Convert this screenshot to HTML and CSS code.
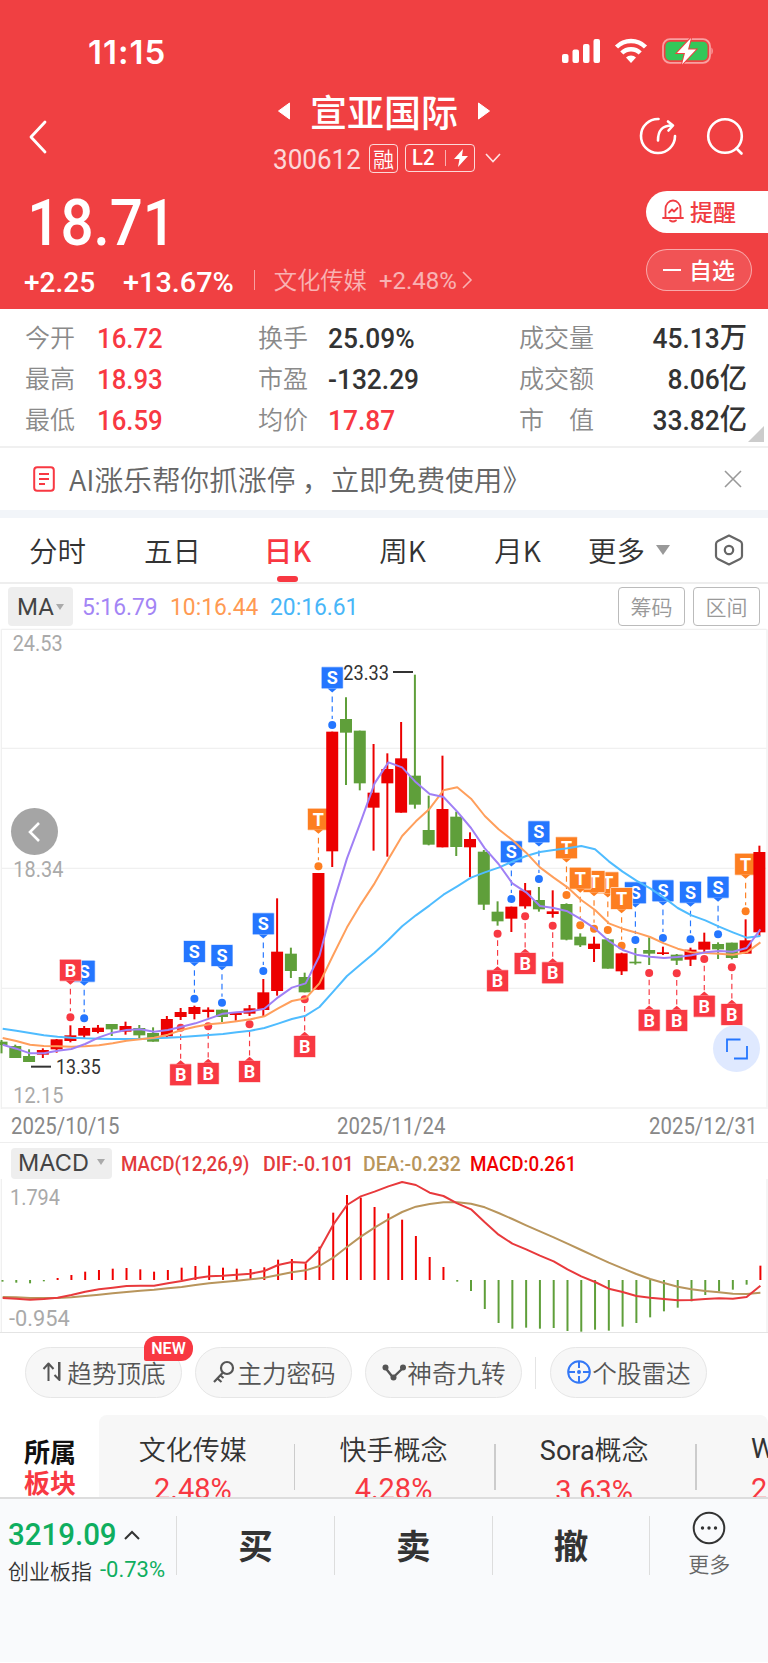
FILE: index.html
```html
<!DOCTYPE html>
<html lang="zh-CN">
<head>
    <meta charset="UTF-8">
    <meta name="viewport" content="width=device-width, initial-scale=1.0">
    <title>宣亚国际 300612</title>
    <link rel="stylesheet" href="styles.css">
</head>
<body>
    <header class="header">
        <div class="status-bar">
            <span class="clock">11:15</span>
            <svg class="status-icons" width="152" height="28" viewBox="0 0 152 28">
                <g fill="#fff">
                    <rect x="1" y="17" width="6.5" height="9" rx="2"/>
                    <rect x="11.5" y="12.5" width="6.5" height="13.5" rx="2"/>
                    <rect x="22" y="7" width="6.5" height="19" rx="2"/>
                    <rect x="32.5" y="2" width="6.5" height="24" rx="2"/>
                    <path d="M70 26l-5-5.500a7 7 0 0 1 10 0z"/>
                </g>
                <g fill="none" stroke="#fff" stroke-width="4.4">
                    <path d="M55.500 10a20.500 20.500 0 0 1 29 0"/>
                    <path d="M60.800 16a13 13 0 0 1 18.400 0"/>
                </g>
                <rect x="102" y="2.2" width="47" height="23.6" rx="7" fill="none" stroke="#fff" stroke-opacity=".5" stroke-width="1.8"/>
                <rect x="104.5" y="4.8" width="42" height="18.4" rx="4.5" fill="#34c759"/>
                <path d="M150.500 10.500c1.600 1 1.600 6 0 7z" fill="#fff" opacity=".6"/>
                <path d="M130 1l-14 15h8l-3 11.500 14-15h-8z" fill="#fff" stroke="#f04042" stroke-width="2" paint-order="stroke"/>
            </svg>
        </div>

        <div class="nav">
            <svg class="back" width="24" height="36" viewBox="0 0 24 36"><path d="M19 3L5 18l14 15" fill="none" stroke="#fff" stroke-width="2.8" stroke-linecap="round" stroke-linejoin="round"/></svg>
            <div class="title-box">
                <div class="title">
                    <svg width="12" height="18" viewBox="0 0 12 18"><path d="M11.500 1v16L.5 9z" fill="#fff" stroke="#fff" stroke-linejoin="round"/></svg>
                    <h1>宣亚国际</h1>
                    <svg width="12" height="18" viewBox="0 0 12 18"><path d="M.5 1v16l11-8z" fill="#fff" stroke="#fff" stroke-linejoin="round"/></svg>
                </div>
                <div class="code-row">
                    <span class="num code">300612</span>
                    <span class="tag">融</span>
                    <span class="tag tag-l2"><span class="num">L2</span><i></i><svg width="14" height="18" viewBox="0 0 14 18"><path d="M9 0L0 10h5.500L4 18l10-11H8z" fill="#fff"/></svg></span>
                    <svg class="down" width="16" height="12" viewBox="0 0 16 12"><path d="M1 2l7 7.500L15 2" fill="none" stroke="#fff" stroke-opacity=".85" stroke-width="1.6"/></svg>
                </div>
            </div>
            <div class="nav-icons">
                <svg width="40" height="40" viewBox="0 0 40 40" fill="none" stroke="#fff" stroke-width="2.6" stroke-linecap="round" stroke-linejoin="round">
                    <path d="M20.500 3A17 17 0 1 0 37 20"/>
                    <path d="M20 24.500c0-9 3-15 14-15M30 5.500l5 4-4.500 5"/>
                </svg>
                <svg width="40" height="40" viewBox="0 0 40 40" fill="none" stroke="#fff" stroke-width="2.6" stroke-linecap="round">
                    <circle cx="20" cy="20" r="16.8"/>
                    <path d="M31.500 32.500l5 5"/>
                </svg>
            </div>
        </div>

        <div class="quote">
            <div>
                <div class="num price">18.71</div>
                <div class="change">
                    <span class="num">+2.25</span>
                    <span class="num pct">+13.67%</span>
                    <i></i>
                    <span class="sector">文化传媒</span>
                    <span class="num sector-pct">+2.48%</span>
                    <svg width="12" height="20" viewBox="0 0 12 20"><path d="M2 2l8 8-8 8" fill="none" stroke="#fff" stroke-opacity=".6" stroke-width="1.6"/></svg>
                </div>
            </div>
            <div class="actions">
                <button class="remind">
                    <svg width="22" height="24" viewBox="0 0 22 24" fill="none" stroke="#f03c42" stroke-width="1.8" stroke-linecap="round" stroke-linejoin="round">
                        <path d="M1 19h20M3.500 19v-9a7.500 8.500 0 0 1 15 0v9M8 21.500q3 2 6 0"/>
                        <path d="M7 13.500l3-3 2 2 3.500-3.500"/>
                    </svg>
                    提醒
                </button>
                <button class="favor"><i></i>自选</button>
            </div>
        </div>
    </header>

    <section class="stats">
        <span class="label">今开</span><b class="num red">16.72</b>
        <span class="label">换手</span><b class="num">25.09%</b>
        <span class="label">成交量</span><b class="num right">45.13<em>万</em></b>
        <span class="label">最高</span><b class="num red">18.93</b>
        <span class="label">市盈</span><b class="num">-132.29</b>
        <span class="label">成交额</span><b class="num right">8.06<em>亿</em></b>
        <span class="label">最低</span><b class="num red">16.59</b>
        <span class="label">均价</span><b class="num red">17.87</b>
        <span class="label">市　值</span><b class="num right">33.82<em>亿</em></b>
        <span class="corner"></span>
    </section>

    <section class="notice">
        <svg width="22" height="26" viewBox="0 0 22 26" fill="none" stroke="#f83842" stroke-width="2">
            <rect x="1.2" y="1.2" width="19.6" height="23.6" rx="3"/>
            <path d="M6 8h10M6 13h10M6 18h6"/>
        </svg>
        <span>AI涨乐帮你抓涨停 ，立即免费使用》</span>
        <svg class="close" width="18" height="20" viewBox="0 0 18 20"><path d="M1 2l16 16M17 2L1 18" stroke="#999" stroke-width="1.6"/></svg>
    </section>

    <nav class="tabs">
        <a>分时</a>
        <a>五日</a>
        <a class="active">日K</a>
        <a>周K</a>
        <a>月K</a>
        <a class="more">更多<i></i></a>
        <svg width="30" height="32" viewBox="0 0 30 32" fill="none" stroke="#666" stroke-width="2.2" stroke-linejoin="round">
            <path d="M15 1.500L26 7q2 1 2 3v12q0 2-2 3l-11 5.500L4 25q-2-1-2-3V10q0-2 2-3z"/>
            <circle cx="15" cy="16" r="4.2"/>
        </svg>
    </nav>

    <div class="ma-row">
        <span class="select num">MA<i></i></span>
        <span class="num ma5">5:16.79</span>
        <span class="num ma10">10:16.44</span>
        <span class="num ma20">20:16.61</span>
        <div class="ma-buttons"><button>筹码</button><button>区间</button></div>
    </div>

    <div class="k-box">
        <svg id="kline" width="768" height="481" viewBox="0 -36 2304 1443"></svg>
        <button class="prev"><svg width="16" height="22" viewBox="0 0 16 22"><path d="M12 2L3 11l9 9" fill="none" stroke="#fff" stroke-width="2.6"/></svg></button>
        <button class="expand"><svg width="22" height="22" viewBox="0 0 22 22"><path d="M1 14V1.500h13.500M8 20.500h13V8" fill="none" stroke="#2476ff" stroke-width="1.8"/></svg></button>
    </div>

    <div class="dates num"><span>2025/10/15</span><span>2025/11/24</span><span>2025/12/31</span></div>

    <div class="macd">
        <div class="macd-row">
            <span class="select">MACD<i></i></span>
            <span class="num dif">MACD(12,26,9)</span>
            <span class="num dif">DIF:-0.101</span>
            <span class="num dea">DEA:-0.232</span>
            <span class="num bar">MACD:0.261</span>
        </div>
        <svg id="macd" width="768" height="153" viewBox="0 240 2304 459"></svg>
    </div>

    <section class="tools">
        <button>
            <svg width="24" height="24" viewBox="0 0 24 24" fill="none" stroke="#555" stroke-width="2"><path d="M6.500 21V4M1.500 9l5-5.500L11.500 9M17 2v18M12.500 15l5 5V2" stroke-linejoin="round"/></svg>趋势顶底
            <span class="new">NEW</span>
        </button>
        <button>
            <svg width="24" height="24" viewBox="0 0 24 24" fill="none" stroke="#555" stroke-width="2.2"><circle cx="15" cy="8" r="6"/><path d="M11 12.500L2 22M5.500 18.500l4 3.500M8.500 15.500l3 2.500"/></svg>主力密码
        </button>
        <button>
            <svg width="24" height="24" viewBox="0 0 24 24" fill="none" stroke="#555" stroke-width="2.4"><path d="M3.500 8l7.500 9.500L21 8"/><g fill="#555" stroke="none"><circle cx="3.5" cy="7.5" r="3"/><circle cx="11.5" cy="17.5" r="3"/><circle cx="21" cy="7.5" r="3"/></g></svg>神奇九转
        </button>
        <i></i>
        <button>
            <svg width="24" height="24" viewBox="0 0 24 24" fill="none" stroke="#3478f6" stroke-width="2"><circle cx="12" cy="12" r="10.8"/><path d="M12 1v7M12 16v7M1 12h7M16 12h7"/><circle cx="12" cy="12" r="2" fill="#3478f6" stroke="none"/></svg>个股雷达
        </button>
    </section>

    <section class="blocks">
        <div class="blocks-title"><span>所属</span><span class="red">板块</span></div>
        <div class="blocks-list">
            <div><span>文化传媒</span><b class="num">2.48%</b></div>
            <div><span>快手概念</span><b class="num">4.28%</b></div>
            <div><span><span class="num">Sora</span>概念</span><b class="num">3.63%</b></div>
            <div class="cut"><span class="num">W</span><b class="num">2</b></div>
        </div>
    </section>

    <footer class="footer">
        <div class="index">
            <div class="index-value"><span class="num">3219.09</span><svg width="16" height="10" viewBox="0 0 16 10"><path d="M1 9l7-7 7 7" fill="none" stroke="#333" stroke-width="2"/></svg></div>
            <div class="index-name">创业板指<span class="num">-0.73%</span></div>
        </div>
        <a>买</a>
        <a>卖</a>
        <a>撤</a>
        <div class="footer-more">
            <svg width="34" height="34" viewBox="0 0 34 34"><circle cx="17" cy="17" r="15.3" fill="none" stroke="#333" stroke-width="2"/><g fill="#333"><circle cx="10.5" cy="17" r="1.7"/><circle cx="17" cy="17" r="1.7"/><circle cx="23.5" cy="17" r="1.7"/></g></svg>
            更多
        </div>
    </footer>

    <script src="chart.js"></script>
</body>
</html>
```
FILE: styles.css
```css
* {
    box-sizing: border-box;
}

body {
    margin: 0;
    width: 768px;
    height: 1663px;
    overflow: hidden;
    background: #fff;
    color: #333;
    font-family: "Noto Sans CJK SC", sans-serif;
    font-weight: 350;
}

h1, b, em, i {
    margin: 0;
    font-style: normal;
}

svg {
    display: block;
    flex: none;
}

span, a, b {
    white-space: nowrap;
}

button {
    padding: 0;
    border: none;
    font: inherit;
    color: inherit;
}

.num {
    font-family: Roboto, "Noto Sans CJK SC", sans-serif;
    font-weight: 400;
    transform-origin: left;
}

.red {
    color: #f83842;
}

/* header */
.header {
    height: 309px;
    background: #f04042;
    color: #fff;
}

.status-bar {
    display: flex;
    justify-content: space-between;
    align-items: center;
    height: 78px;
    padding: 26px 55px 0 88px;
}

.clock {
    font: 600 33px/38px Inter, sans-serif;
    letter-spacing: 1px;
}

.status-icons {
    margin-top: -3px;
}

.nav {
    display: flex;
    height: 102px;
}

.back {
    margin: 41px 0 0 26px;
}

.title-box {
    width: 260px;
    margin-left: 215px;
}

.title {
    display: flex;
    align-items: center;
    justify-content: center;
    height: 66px;
    gap: 20px;
    margin-left: -22px;
}

.title h1 {
    font-size: 37px;
    font-weight: 500;
    line-height: 66px;
}

.code-row {
    display: flex;
    align-items: center;
    height: 28px;
    padding-left: 8px;
}

.code {
    width: 96px;
    padding-top: 2px;
    font-size: 28px;
    opacity: .8;
    transform: scaleX(.93);
}

.tag {
    display: flex;
    align-items: center;
    justify-content: center;
    width: 29px;
    height: 29px;
    border: 1.5px solid rgba(255, 255, 255, .8);
    border-radius: 4px;
    font-size: 21px;
    line-height: 26px;
}

.tag-l2 {
    width: 70px;
    height: 28px;
    margin-left: 7px;
    gap: 8px;
    font-size: 22px;
}

.tag-l2 .num {
    font-weight: 500;
    transform: scaleX(.92);
}

.tag-l2 i {
    width: 1px;
    height: 16px;
    background: rgba(255, 255, 255, .6);
}

.down {
    margin-left: 10px;
}

.nav-icons {
    display: flex;
    gap: 27px;
    margin: 38px 0 0 113px;
}

.quote {
    display: flex;
    justify-content: space-between;
}

.price {
    height: 86px;
    padding: 2px 0 0 30px;
    font-size: 64px;
    font-weight: 500;
    line-height: 84px;
    transform: scaleX(.91);
}

.change {
    display: flex;
    align-items: center;
    height: 32px;
    padding-left: 24px;
    font-size: 28px;
}

.change .num {
    font-weight: 500;
}

.change .pct {
    margin-left: 28px;
    transform: scaleX(1.03);
}

.change i {
    width: 1px;
    height: 20px;
    margin: -4px 19px 0 23px;
    background: rgba(255, 255, 255, .5);
}

.change .sector {
    margin: -6px 12px 0 0;
    font-size: 23.300px;
    opacity: .6;
}

.change .sector-pct {
    margin: -2px 4px 0 0;
    font-size: 24px;
    font-weight: 400;
    opacity: .6;
}

.change svg {
    margin-top: -4px;
}

.actions {
    display: flex;
    flex-direction: column;
    align-items: flex-start;
    gap: 16px;
    width: 122px;
    padding-top: 11px;
}

.actions button {
    display: flex;
    align-items: center;
    gap: 6px;
    height: 42px;
    padding-bottom: 3px;
    font-size: 23px;
    font-weight: 500;
}

.remind {
    width: 122px;
    padding-left: 16px;
    border-radius: 21px 0 0 21px;
    background: #fff;
    color: #f03c42;
}

.actions .favor {
    width: 106px;
    gap: 8px;
    padding: 0 0 3px 16px;
    border: 1.5px solid rgba(255, 255, 255, .5);
    border-radius: 21px;
    background: rgba(255, 255, 255, .1);
    color: #fff;
}

.favor i {
    width: 18px;
    height: 2px;
    margin-top: 2px;
    background: #fff;
}

/* stats */
.stats {
    position: relative;
    display: grid;
    grid-template-columns: 73px 160px 71px 190px 110px 118px;
    grid-auto-rows: 41.400px;
    align-items: center;
    height: 139px;
    padding: 9px 0 0 25px;
    border-bottom: 2px solid #f0f0f0;
    font-size: 25px;
}

.stats .label {
    margin: -6px 0 0;
    color: #8a8a8a;
}

.stats b {
    margin-left: -1px;
    font-size: 28px;
    font-weight: 500;
    line-height: 34px;
    transform: scaleX(.92);
}

.stats b:nth-of-type(3n + 2) {
    transform: scaleX(.94);
}

.stats em {
    font-size: 29px;
    line-height: 1;
}

.stats .right {
    margin-right: 0;
    text-align: right;
    transform: scaleX(.94);
    transform-origin: right;
}

.corner {
    position: absolute;
    right: 4px;
    bottom: 4px;
    border-left: 16px solid transparent;
    border-bottom: 16px solid #ccc;
}

.notice {
    display: flex;
    align-items: center;
    height: 70px;
    padding: 0 26px 0 33px;
    border-bottom: 8px solid #f2f5f9;
    color: #666;
    font-size: 28.700px;
}

.notice span {
    margin: -2px auto 0 14px;
}

/* period tabs */
.tabs {
    display: flex;
    align-items: center;
    height: 66px;
    padding-right: 24px;
    border-bottom: 2px solid #eee;
    font-size: 28.500px;
    color: #333;
}

.tabs a {
    position: relative;
    width: 115px;
    line-height: 64px;
    text-align: center;
}

.tabs .active {
    color: #f83842;
    font-weight: 500;
}

.tabs .active::after {
    content: "";
    position: absolute;
    left: 47px;
    bottom: 0;
    width: 21px;
    height: 6px;
    border-radius: 3px;
    background: #f83842;
}

.tabs .more {
    display: flex;
    align-items: center;
    gap: 11px;
    width: auto;
    margin: 0 auto 0 13px;
}

.tabs .more i {
    border: 7px solid transparent;
    border-top: 10px solid #999;
    border-bottom: 0;
}

.ma-row {
    display: flex;
    align-items: center;
    height: 45px;
    padding: 0 8px;
    font-size: 24px;
}

.ma-row > .num:not(.select) {
    transform: scaleX(.95);
}

.select {
    display: flex;
    align-items: center;
    justify-content: center;
    gap: 2px;
    width: 65px;
    height: 39px;
    margin-right: 9px;
    border-radius: 4px;
    background: #eee;
    color: #444;
}

.select i {
    border: 4.500px solid transparent;
    border-top: 6px solid #aaa;
    border-bottom: 0;
}

.ma5 {
    width: 88px;
    color: #a385f5;
}

.ma10 {
    width: 100px;
    color: #ff9a52;
}

.ma20 {
    color: #48b6f8;
}

.ma-buttons {
    display: flex;
    gap: 8px;
    margin-left: auto;
}

.ma-buttons button {
    width: 67px;
    height: 39px;
    border: 1.500px solid #bbb;
    border-radius: 4px;
    background: #fff;
    color: #999;
    font-size: 21px;
    line-height: 33px;
}

/* charts */
.k-box {
    position: relative;
    height: 480px;
}

.k-box > svg {
    margin-top: -1px;
}

.k-box text,
.macd text {
    font-family: Roboto, sans-serif;
    font-weight: 400;
}

.k-box .flag {
    font-weight: 700;
}

.prev,
.expand {
    position: absolute;
    display: flex;
    align-items: center;
    justify-content: center;
    width: 47px;
    height: 47px;
    border-radius: 50%;
}

.prev {
    left: 11px;
    top: 180px;
    background: #a5a5a5;
}

.expand {
    left: 713px;
    top: 397px;
    background: #dfe9ff;
}

.dates {
    display: flex;
    justify-content: space-between;
    height: 35px;
    padding: 0 11px;
    border-bottom: 1.500px solid #eee;
    color: #888;
    font-size: 23px;
    line-height: 38px;
}

.dates span {
    transform: scaleX(.885);
    transform-origin: left;
}

.dates span:nth-child(2) {
    margin-left: 14px;
    transform-origin: center;
}

.dates span:last-child {
    transform-origin: right;
}

.macd {
    height: 190px;
    border-bottom: 1.500px solid #e4e4e4;
}

.macd-row {
    display: flex;
    align-items: center;
    height: 36px;
    padding: 4px 0 0 11px;
    font-size: 20px;
}

.macd-row .num {
    margin-top: 2px;
    font-weight: 500;
    transform: scaleX(.94);
}

.macd-row .select {
    gap: 8px;
    width: 101px;
    height: 31px;
    padding-bottom: 2px;
    font-family: Inter, sans-serif;
    font-size: 23.500px;
    font-weight: 400;
}

.dif {
    width: 142px;
    color: #e23a3c;
}

.macd-row .dif + .dif {
    width: 100px;
    transform: scaleX(.98);
}

.macd-row .dea {
    width: 107px;
    color: #b8955c;
    transform: scaleX(.97);
}

.bar {
    color: #f00000;
}

/* tools */
.tools {
    display: flex;
    align-items: center;
    height: 82px;
    padding: 0 0 3px 25px;
    gap: 13px;
}

.tools button {
    position: relative;
    display: flex;
    align-items: center;
    justify-content: center;
    gap: 1px;
    width: 157px;
    height: 51px;
    padding: 0 0 2px 1px;
    border: 1.500px solid #e6e6e6;
    border-radius: 26px;
    background: #f7f7f7;
    color: #555;
    font-size: 24.600px;
}

.tools > i {
    width: 2px;
    height: 32px;
    border-left: 1px solid #e4e4e4;
}

.new {
    position: absolute;
    left: 118px;
    top: -12px;
    width: 49px;
    height: 25px;
    border-radius: 12px 12px 12px 2px;
    background: #f83842;
    color: #fff;
    font: 600 16px/26px Roboto, sans-serif;
    text-align: center;
}

.blocks {
    display: flex;
    height: 82px;
    overflow: hidden;
}

.blocks-title {
    display: flex;
    flex-direction: column;
    width: 99px;
    padding: 20px 0 0 24px;
    color: #111;
    font-size: 26px;
    font-weight: 700;
    line-height: 31px;
}

.blocks-title .red {
    color: #f83842;
}

.blocks-list {
    display: flex;
    width: 669px;
    border-radius: 8px 8px 0 0;
    background: #f7f7f7;
}

.blocks-list div {
    position: relative;
    display: flex;
    flex: none;
    flex-direction: column;
    align-items: center;
    width: 200.700px;
    left: -6px;
    padding: 15px 1px 0 0;
    font-size: 27px;
    line-height: 38px;
}

.blocks-list div + div::before {
    content: "";
    position: absolute;
    left: 0;
    top: 29px;
    width: 1.500px;
    height: 46px;
    background: #ccc;
}

.blocks-list b {
    margin-top: 2px;
    color: #f83842;
    font-size: 29px;
    font-weight: 400;
}

.blocks-list .cut {
    align-items: flex-start;
    width: 78px;
    padding-left: 56px;
}

/* bottom bar */
.footer {
    display: flex;
    height: 165px;
    padding-top: 17px;
    border-top: 2px solid #ddd;
    background: #f9fafc;
}

.index {
    width: 176px;
    padding-left: 8px;
}

.index-value {
    display: flex;
    align-items: center;
    gap: 2px;
    height: 37px;
    color: #0fae5f;
    font-size: 31px;
}

.index-value .num {
    font-weight: 500;
    transform: scaleX(.95);
}

.index-name {
    display: flex;
    align-items: center;
    gap: 8px;
    height: 33px;
    font-size: 21px;
}

.index-name .num {
    color: #0fae5f;
    font-size: 22px;
}

.footer a {
    width: 157.800px;
    height: 59px;
    border-left: 1.500px solid #ddd;
    font-size: 34.500px;
    font-weight: 600;
    line-height: 57px;
    text-align: center;
}

.footer-more {
    display: flex;
    flex: 1;
    flex-direction: column;
    align-items: center;
    height: 59px;
    border-left: 1.500px solid #ddd;
    color: #666;
    font-size: 21px;
    line-height: 30px;
}

.footer-more svg {
    margin: -5px 0 3px;
}
```
FILE: chart.js
```js
const RED = '#ec0000';
const GREEN = '#5f9f3a';
const STEP = 41.34;

// [up, high, body top, body bottom, low]
const candles = [
    [0, 1200, 1205, 1215, 1240], [0, 1214, 1218, 1254, 1254], [0, 1228, 1248, 1266, 1266], [1, 1225, 1230, 1244, 1254],
    [1, 1197, 1198, 1228, 1238], [1, 1156, 1186, 1203, 1207], [1, 1158, 1164, 1187, 1195], [1, 1155, 1163, 1176, 1180],
    [0, 1152, 1152, 1168, 1188], [1, 1145, 1158, 1175, 1184], [0, 1155, 1164, 1186, 1195], [0, 1162, 1179, 1205, 1205],
    [1, 1128, 1137, 1189, 1193], [1, 1104, 1116, 1131, 1140], [1, 1097, 1101, 1122, 1138], [1, 1102, 1109, 1116, 1133],
    [0, 1108, 1109, 1131, 1146], [1, 1116, 1118, 1125, 1142], [1, 1095, 1105, 1121, 1128], [1, 1017, 1057, 1110, 1130],
    [1, 775, 935, 1053, 1067], [0, 923, 941, 993, 1014], [0, 998, 1011, 1057, 1057], [1, 699, 699, 1049, 1049],
    [1, 275, 275, 634, 681], [0, 172, 237, 278, 435], [0, 272, 272, 430, 451], [1, 312, 458, 503, 632],
    [1, 340, 387, 430, 650], [1, 246, 355, 518, 518], [0, 104, 407, 494, 506], [0, 467, 570, 614, 616],
    [1, 347, 507, 622, 622], [0, 515, 530, 621, 648], [1, 577, 597, 622, 711], [0, 630, 635, 794, 810],
    [0, 784, 815, 844, 857], [1, 800, 800, 836, 876], [1, 729, 751, 799, 806], [0, 741, 780, 808, 815],
    [1, 751, 814, 822, 833], [0, 790, 792, 899, 901], [0, 880, 890, 916, 921], [1, 890, 911, 927, 966],
    [0, 895, 898, 986, 986], [1, 938, 940, 994, 1005], [0, 924, 965, 970, 974], [0, 892, 930, 941, 975],
    [1, 920, 937, 942, 945], [0, 942, 944, 962, 975], [1, 923, 929, 959, 978], [1, 878, 905, 929, 938],
    [0, 907, 912, 928, 957], [0, 908, 908, 954, 958], [1, 838, 901, 941, 941], [1, 617, 636, 877, 888]
];

const ma5 = [1214, 1226, 1240, 1240, 1232, 1227, 1212, 1192, 1178, 1170, 1168, 1175, 1170, 1160, 1150, 1136, 1121, 1117, 1114, 1106, 1072, 1043, 1030, 948, 790, 655, 545, 430, 367, 382, 427, 462, 471, 515, 564, 625, 672, 730, 757, 798, 804, 814, 838, 866, 903, 930, 944, 950, 954, 951, 946, 937, 933, 935, 924, 868];
const ma10 = [1194, 1203, 1214, 1218, 1219, 1220, 1219, 1216, 1210, 1202, 1198, 1193, 1184, 1170, 1160, 1153, 1149, 1144, 1138, 1129, 1105, 1083, 1075, 1030, 945, 862, 793, 730, 658, 588, 544, 506, 451, 442, 476, 528, 568, 600, 638, 682, 713, 742, 780, 810, 850, 866, 878, 891, 910, 926, 937, 939, 941, 944, 937, 907];
const ma20 = [1166, 1172, 1179, 1186, 1190, 1193, 1195, 1196, 1197, 1197, 1197, 1195, 1193, 1191, 1188, 1185, 1182, 1177, 1172, 1164, 1151, 1137, 1127, 1101, 1055, 1008, 973, 938, 900, 859, 826, 796, 764, 739, 713, 697, 683, 665, 648, 636, 630, 625, 618, 628, 664, 695, 722, 745, 773, 804, 826, 841, 860, 877, 893, 888];

// [candle index, letter, dot y, flag below the dot]
const marks = [
    [6, 'S', 1135], [5, 'B', 1132], [14, 'S', 1076], [16, 'S', 1088], [19, 'S', 993], [23, 'T', 679], [24, 'S', 255],
    [37, 'S', 777], [39, 'S', 717], [46, 'S', 900], [48, 'S', 894], [50, 'S', 898], [52, 'S', 883],
    [54, 'T', 814], [44, 'T', 870], [43, 'T', 866], [42, 'T', 856], [41, 'T', 765], [45, 'T', 917],
    [13, 'B', 1163, 1], [15, 'B', 1159, 1], [18, 'B', 1153, 1], [22, 'B', 1078, 1], [36, 'B', 881, 1], [38, 'B', 829, 1],
    [40, 'B', 857, 1], [47, 'B', 999, 1], [49, 'B', 1000, 1], [51, 'B', 957, 1], [53, 'B', 982, 1]
];
const markColors = { S: '#2476ff', B: '#f83842', T: '#fd7e20' };

const bars = [548, 551, 553, 547, 537, 528, 518, 513, 509, 507, 511, 518, 513, 506, 501, 500, 506, 509, 510, 505, 482, 480, 493, 443, 341, 288, 296, 324, 343, 362, 411, 474, 504, 548, 576, 630, 672, 689, 686, 689, 687, 696, 698, 692, 695, 683, 672, 655, 637, 626, 607, 588, 577, 572, 557, 500];
const dif = [597, 599, 602, 600, 596, 588, 578, 571, 566, 561, 560, 560, 553, 546, 538, 532, 530, 527, 524, 516, 498, 489, 491, 452, 377, 318, 292, 278, 262, 249, 258, 281, 291, 313, 331, 370, 407, 434, 451, 470, 487, 511, 532, 549, 569, 579, 591, 596, 600, 604, 603, 600, 598, 599, 594, 560];
const dea = [594, 595, 597, 597, 597, 595, 591, 587, 583, 579, 575, 572, 568, 564, 558, 553, 549, 545, 541, 536, 528, 520, 514, 501, 476, 444, 413, 386, 361, 339, 323, 315, 310, 310, 314, 325, 342, 360, 379, 397, 415, 434, 453, 472, 491, 508, 525, 540, 552, 563, 571, 576, 580, 584, 585, 581];

const cx = i => 4.5 + i * STEP;

function line(x1, y1, x2, y2, color, width, extra = '') {
    return `<line x1="${x1}" y1="${y1}" x2="${x2}" y2="${y2}" stroke="${color}" stroke-width="${width}" ${extra}/>`;
}

function curve(values, color) {
    const points = values.map((y, i) => `${i ? cx(i) + 3 : 8},${y}`).join(' ');
    return `<polyline points="${points}" fill="none" stroke="${color}" stroke-width="6" stroke-linejoin="round"/>`;
}

function label(x, y, text, color = '#aaa', size = 67, length = 150) {
    return `<text x="${x}" y="${y}" font-size="${size}" fill="${color}" textLength="${length}" lengthAdjust="spacingAndGlyphs">${text}</text>`;
}

function mark([i, letter, y, below]) {
    const x = cx(i);
    const color = markColors[letter];
    const top = below ? y + 109.5 : y - 173.5;
    const tip = below ? `M${x - 14} ${top}l14 -12l14 12z` : `M${x - 14} ${top + 64}l14 12l14 -12z`;
    const stem = below ? line(x, y + 20, x, top - 16, color, 3.5, 'stroke-dasharray="17 12"') : line(x, top + 88, x, y - 18, color, 3.5, 'stroke-dasharray="17 12"');
    return `${stem}<circle cx="${x}" cy="${y}" r="12" fill="${color}"/>
        <rect x="${x - 33}" y="${top - 1}" width="66" height="66" rx="3" fill="${color}" stroke="#fff" stroke-width="2"/>
        <path d="${tip}" fill="${color}"/>
        <text class="flag" x="${x}" y="${top + 51}" font-size="54" fill="#fff" text-anchor="middle">${letter}</text>`;
}

function drawKline() {
    let out = '';
    for (const y of [-32, 325, 685, 1045, 1404]) out += line(4, y, 2300, y, '#f0f0f0', 4);
    out += line(4, -32, 4, 1408, '#f0f0f0', 4) + line(2301, -32, 2301, 1408, '#f0f0f0', 4);
    out += label(38, 33, '24.53') + label(40, 711, '18.34') + label(40, 1389, '12.15');
    out += marks.map(mark).join('');
    candles.forEach(([up, high, top, bottom, low], i) => {
        const color = up ? RED : GREEN;
        out += line(cx(i), high, cx(i), low, color, 6);
        out += `<rect x="${cx(i) - 18}" y="${top}" width="36" height="${bottom - top}" fill="${color}"/>`;
    });
    out += curve(ma20, '#4fbcff') + curve(ma10, '#ff9f5c') + curve(ma5, '#a080f5');
    out += line(93, 1280, 153, 1280, '#333', 6) + label(168, 1303, '13.35', '#333', 63, 134);
    out += line(1179, 96, 1239, 96, '#333', 6) + label(1030, 119, '23.33', '#333', 63, 137);
    document.getElementById('kline').innerHTML = out;
}

function drawMacd() {
    let out = line(4, 240, 4, 702, '#f0f0f0', 4) + line(2301, 240, 2301, 702, '#f0f0f0', 4);
    out += label(30, 318, '1.794') + label(27, 682, '-0.954', '#aaa', 67, 182);
    bars.forEach((y, i) => {
        out += line(cx(i) + 3, 543, cx(i) + 3, y, y < 543 ? '#f00000' : GREEN, 6);
    });
    out += curve(dea, '#b8955c') + curve(dif, '#e8393c');
    document.getElementById('macd').innerHTML = out;
}

drawKline();
drawMacd();
```
